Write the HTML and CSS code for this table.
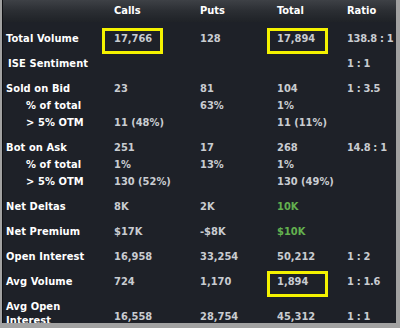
FILE: index.html
```html
<!DOCTYPE html>
<html>
<head>
<meta charset="utf-8">
<link rel="stylesheet" href="styles.css">
</head>
<body>
<div class="panel">
  <div class="head grid">
    <span></span><span>Calls</span><span>Puts</span><span>Total</span><span>Ratio</span>
  </div>
  <div class="row grid first">
    <span class="lbl">Total Volume</span><span class="val"><span class="hl">17,766</span></span><span class="val">128</span><span class="val"><span class="hl hl-t">17,894</span></span><span class="val ratio">138.8 : 1</span>
  </div>
  <div class="row grid">
    <span class="lbl ise">ISE Sentiment</span><span></span><span></span><span></span><span class="val ratio">1 : 1</span>
  </div>
  <div class="row grid">
    <span class="lbl">Sold on Bid</span><span class="val">23</span><span class="val">81</span><span class="val">104</span><span class="val ratio">1 : 3.5</span>
  </div>
  <div class="sub grid">
    <span class="lbl ind">% of total</span><span></span><span class="val">63%</span><span class="val">1%</span><span></span>
  </div>
  <div class="sub grid">
    <span class="lbl ind">&gt; 5% OTM</span><span class="val">11 (48%)</span><span></span><span class="val">11 (11%)</span><span></span>
  </div>
  <div class="row grid">
    <span class="lbl">Bot on Ask</span><span class="val">251</span><span class="val">17</span><span class="val">268</span><span class="val ratio">14.8 : 1</span>
  </div>
  <div class="sub grid">
    <span class="lbl ind">% of total</span><span class="val">1%</span><span class="val">13%</span><span class="val">1%</span><span></span>
  </div>
  <div class="sub grid">
    <span class="lbl ind">&gt; 5% OTM</span><span class="val">130 (52%)</span><span></span><span class="val">130 (49%)</span><span></span>
  </div>
  <div class="row grid">
    <span class="lbl">Net Deltas</span><span class="val">8K</span><span class="val">2K</span><span class="val green">10K</span><span></span>
  </div>
  <div class="row grid">
    <span class="lbl">Net Premium</span><span class="val">$17K</span><span class="val">-$8K</span><span class="val green">$10K</span><span></span>
  </div>
  <div class="row grid">
    <span class="lbl">Open Interest</span><span class="val">16,958</span><span class="val">33,254</span><span class="val">50,212</span><span class="val ratio">1 : 2</span>
  </div>
  <div class="row grid">
    <span class="lbl">Avg Volume</span><span class="val">724</span><span class="val">1,170</span><span class="val"><span class="hl hl-t">1,894</span></span><span class="val ratio">1 : 1.6</span>
  </div>
  <div class="row grid last">
    <span class="lbl two">Avg Open<br>Interest</span><span class="val low">16,558</span><span class="val low">28,754</span><span class="val low">45,312</span><span class="val low ratio">1 : 1</span>
  </div>
</div>
</body>
</html>
```

FILE: styles.css
```css
html, body {
  margin: 0;
  padding: 0;
}
body {
  width: 400px;
  height: 328px;
  background: #a2a2a2;
  overflow: hidden;
  font-family: "DejaVu Sans Condensed", "DejaVu Sans", sans-serif;
  font-weight: bold;
  font-size: 11px;
}
.panel {
  margin-left: 2px;
  width: 394px;
  height: 323px;
  background: #1e2128;
  border-left: 1px solid #0d0e11;
  box-sizing: border-box;
  overflow: hidden;
}
.grid {
  display: grid;
  grid-template-columns: 111px 86px 77px 70px 1fr;
  line-height: 17px;
  white-space: nowrap;
}
.head {
  height: 22px;
  line-height: 22px;
  color: #ffffff;
  background: linear-gradient(to bottom, #3e4146 0%, #2b2e33 50%, #1f2227 100%);
}
.row {
  margin-top: 8px;
}
.lbl {
  color: #ffffff;
  padding-left: 3px;
  letter-spacing: 0.1px;
}
.lbl.ise {
  padding-left: 5px;
}
.lbl.ind {
  padding-left: 23px;
}
.val {
  color: #c9ccd1;
  position: relative;
}
.ratio {
  letter-spacing: -0.3px;
}
.green {
  color: #63b14f;
}
.hl {
  position: relative;
}
.hl::before {
  content: "";
  position: absolute;
  left: -12px;
  top: -4px;
  width: 61px;
  height: 26px;
  box-sizing: border-box;
  border: 3px solid #f4f200;
}
.hl-t::before {
  left: -10px;
}
.two {
  line-height: 14px;
  padding-top: 2px;
}
.low {
  padding-top: 10px;
}
```
